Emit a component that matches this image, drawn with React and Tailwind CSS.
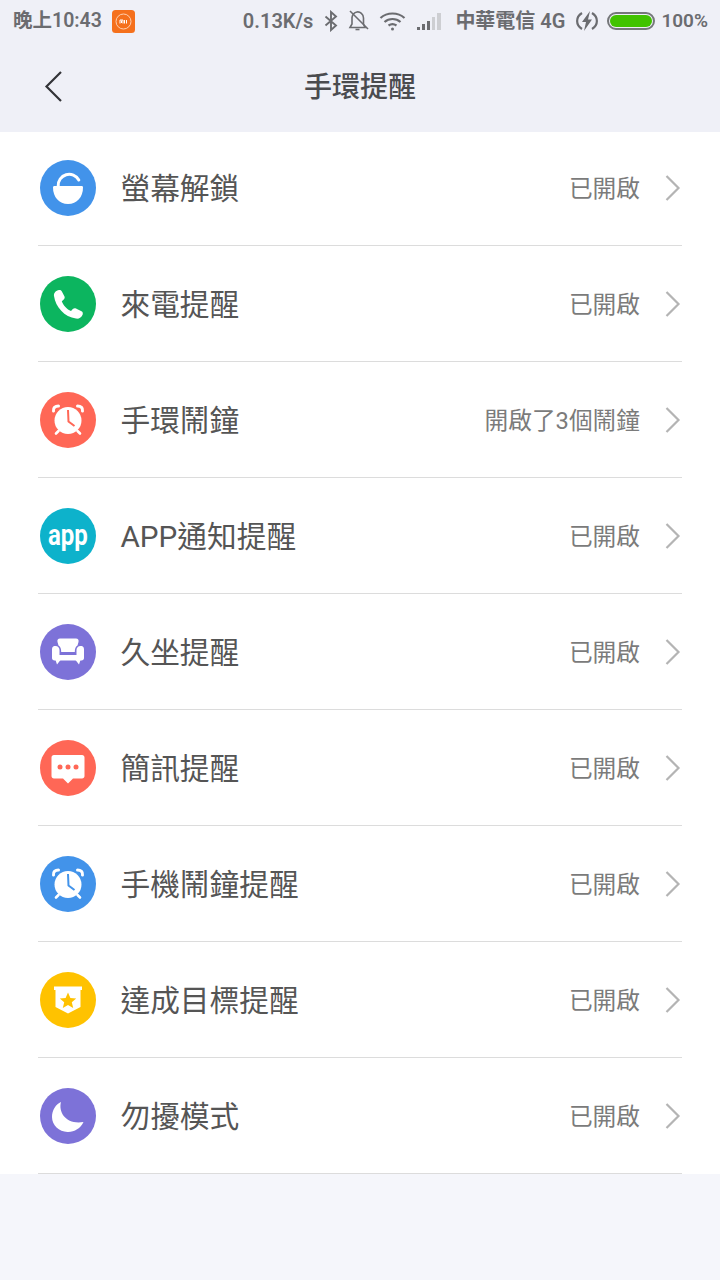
import React from "react";

const Chevron = () => (
  <svg width="18" height="28" viewBox="0 0 18 28" fill="none" className="ml-[24px] shrink-0">
    <path d="M2.5 2 L14.5 14 L2.5 26" stroke="#b4b4b4" strokeWidth="2.2" />
  </svg>
);

const Circle = ({ color, children }) => (
  <div className={`w-[56px] h-[56px] rounded-full shrink-0 ml-[40px] flex items-center justify-center ${color}`}>
    <svg width="56" height="56" viewBox="0 0 56 56">{children}</svg>
  </div>
);

const AlarmGlyph = ({ bg }) => (
  <g>
    <circle cx="28" cy="28.5" r="13.5" fill="#fff" />
    <path d="M13.5 19 C13 16 15 14 18.5 14" fill="none" stroke="#fff" strokeWidth="3" strokeLinecap="round" />
    <path d="M42.5 19 C43 16 41 14 37.5 14" fill="none" stroke="#fff" strokeWidth="3" strokeLinecap="round" />
    <path d="M18.5 39 L16 41.5 M37.5 39 L40 41.5" stroke="#fff" strokeWidth="2.6" strokeLinecap="round" />
    <path d="M28 18 L28.5 29.5 L34.5 34" fill="none" stroke={bg} strokeWidth="2" />
  </g>
);

const icons = [
  <Circle color="bg-[#4293ea]" key="a">
    <path d="M18.2 26 A11 11 0 0 1 38.8 20" fill="none" stroke="#fff" strokeWidth="3" strokeLinecap="round" />
    <path d="M14.5 26 H41.5 C42.5 26 43 26.5 43 27.5 C43 37 37 44 28 44 C19 44 13 37 13 27.5 C13 26.5 13.5 26 14.5 26 Z" fill="#fff" />
  </Circle>,
  <Circle color="bg-[#0cb55f]" key="b">
    <path d="M14 20 C13.5 17 16 14.5 19 14 C20.5 13.8 21.5 14.5 22 15.8 L24.5 20.5 C25 21.8 24.5 22.8 23.5 23.7 L21.8 25.2 C23.2 29.5 27 33.3 31 35 L32.8 33.1 C33.8 32.1 34.9 31.9 36 32.5 L41.5 35.3 C42.7 36 43.1 37.1 42.7 38.5 C41.7 41.5 39 43 36 42.6 C24.5 41 15.5 31 14 20 Z" fill="#fff" />
  </Circle>,
  <Circle color="bg-[#ff6756]" key="c"><AlarmGlyph bg="#ff6756" /></Circle>,
  <div key="d" className="w-[56px] h-[56px] rounded-full shrink-0 ml-[40px] flex items-center justify-center bg-[#0db2cb]">
    <span className="text-[30px] font-bold leading-none text-white scale-x-[0.8] mb-[2px]">app</span>
  </div>,
  <Circle color="bg-[#7d72d8]" key="e">
    <path d="M20 14.5 H36 C38 14.5 39 16 38.5 18 L37.5 21.5 C35.5 22.5 34.8 25 34.8 28 H21.2 C21.2 25 20.5 22.5 18.5 21.5 L17.5 18 C17 16 18 14.5 20 14.5 Z" fill="#fff" />
    <path d="M12 25 C12 22.5 14 22 15.5 22 C18 22 19.5 24 19.5 26 V31 H36.5 V26 C36.5 24 38 22 40.5 22 C42 22 44 22.5 44 25 V34 C44 35.5 43 36.5 41.5 36.5 H14.5 C13 36.5 12 35.5 12 34 Z" fill="#fff" />
    <path d="M15.5 36 L17 40.5 L20.5 36 Z M40.5 36 L39 40.5 L35.5 36 Z" fill="#fff" />
  </Circle>,
  <Circle color="bg-[#ff6756]" key="f">
    <path d="M14 15 H42 C43.5 15 44.5 16 44.5 17.5 V36 C44.5 37.5 43.5 38.5 42 38.5 H33 L28 43.5 L23 38.5 H14 C12.5 38.5 11.5 37.5 11.5 36 V17.5 C11.5 16 12.5 15 14 15 Z" fill="#fff" />
    <circle cx="20" cy="27" r="2.5" fill="#ff6756" />
    <circle cx="28" cy="27" r="2.5" fill="#ff6756" />
    <circle cx="36" cy="27" r="2.5" fill="#ff6756" />
  </Circle>,
  <Circle color="bg-[#4293ea]" key="g"><AlarmGlyph bg="#4293ea" /></Circle>,
  <Circle color="bg-[#ffc200]" key="h">
    <path d="M14 14.5 H42 V18 H40.5 V35 L28 41.5 L15.5 35 V18 H14 Z" fill="#fff" />
    <path d="M28 20.5 L30.4 26 L36.2 26.5 L31.8 30.3 L33.2 36 L28 33 L22.8 36 L24.2 30.3 L19.8 26.5 L25.6 26 Z" fill="#ffc200" />
  </Circle>,
  <Circle color="bg-[#7d72d8]" key="i">
    <path d="M21 14 C18 25 27 37 43.5 34 C40.5 40.5 34 44.3 27.5 44 C19 43.7 12 37 12 29 C12 22 16 16 21 14 Z" fill="#fff" />
  </Circle>,
];

const rows = [
  ["螢幕解鎖", "已開啟"],
  ["來電提醒", "已開啟"],
  ["手環鬧鐘", "開啟了3個鬧鐘"],
  ["APP通知提醒", "已開啟"],
  ["久坐提醒", "已開啟"],
  ["簡訊提醒", "已開啟"],
  ["手機鬧鐘提醒", "已開啟"],
  ["達成目標提醒", "已開啟"],
  ["勿擾模式", "已開啟"],
];

const font = "font-['Roboto','Noto_Sans_CJK_TC',sans-serif]";

function StatusBar() {
  return (
    <div className="h-[42px] flex items-center text-[20px] font-semibold text-[#6b6c70] pl-[13px] pr-[12px] whitespace-nowrap">
      <span className="text-[19.5px]">晚上10:43</span>
      <svg width="23" height="23" viewBox="0 0 23 23" className="ml-[10px] shrink-0">
        <rect width="23" height="23" rx="3.5" fill="#f5701c" />
        <circle cx="11.5" cy="11.5" r="7.5" fill="none" stroke="#ffd9bf" strokeWidth="0.9" />
        <path d="M8 13.5 V10 H11 V13.5 M9.5 10.5 V13 M12.5 10 V13.5 M14.5 10 V13.5" fill="none" stroke="#fff" strokeWidth="1" />
      </svg>
      <span className="ml-auto">0.13K/s</span>
      <svg width="14" height="22" viewBox="0 0 14 22" className="ml-[11px] shrink-0" fill="none" stroke="#6b6c70" strokeWidth="1.9">
        <path d="M1.5 6.5 L12 15.5 L7 20 V2 L12 6.5 L1.5 15.5" />
      </svg>
      <svg width="22" height="24" viewBox="0 0 22 24" className="ml-[10px] shrink-0" fill="none" stroke="#6b6c70" strokeWidth="1.6">
        <path d="M2 18.5 H17 L15.5 15 V9 C15.5 5 12 2.5 9 3 C6.5 3.5 4.5 5.5 4 8.5 V15 Z" />
        <path d="M7.5 20.5 H11.5" />
        <path d="M2 2 L20 20" />
      </svg>
      <svg width="27" height="20" viewBox="0 0 27 20" className="ml-[9px] shrink-0" fill="none" stroke="#6b6c70" strokeWidth="2.2">
        <path d="M1.5 7 C8 1 19 1 25.5 7" />
        <path d="M5.5 11 C10 7 17 7 21.5 11" />
        <path d="M9.5 14.5 C12 12.8 15 12.8 17.5 14.5" />
        <circle cx="13.5" cy="18" r="1.5" fill="#6b6c70" stroke="none" />
      </svg>
      <svg width="25" height="18" viewBox="0 0 25 18" className="ml-[11px] shrink-0">
        <path d="M0 15 H3 V18 H0 Z M5 12 H8 V18 H5 Z M10 9 H13 V18 H10 Z" fill="#6b6c70" />
        <path d="M15 5 H18 V18 H15 Z M20 1 H24 V18 H20 Z" fill="#cdced2" />
      </svg>
      <span className="ml-[13px]">中華電信 4G</span>
      <svg width="22" height="22" viewBox="0 0 22 22" className="ml-[11px] shrink-0" fill="none">
        <path d="M6 3 C-0.5 7 -0.5 15 6 19 M16 3 C22.5 7 22.5 15 16 19" stroke="#6b6c70" strokeWidth="2.2" />
        <path d="M14 1 L6 12 H10 L8 21 L16 9.5 H12 Z" fill="#6b6c70" />
      </svg>
      <div className="ml-[9px] w-[48px] h-[18px] rounded-full border-2 border-[#75777a] p-[1px] shrink-0">
        <div className="w-full h-full rounded-full bg-[#41c300]" />
      </div>
      <span className="ml-[6px] text-[19px]">100%</span>
    </div>
  );
}

export default function App() {
  return (
    <div className={`w-[720px] h-[1280px] bg-[#f5f6fb] ${font} overflow-hidden`}>
      <div className="h-[132px] bg-[#eff0f7]">
        <StatusBar />
        <div className="relative h-[90px] flex items-center justify-center">
          <svg width="20" height="34" viewBox="0 0 20 34" fill="none" className="absolute left-[44px] top-[28px]">
            <path d="M17 2 L2.5 16.5 L17 31" stroke="#333438" strokeWidth="2.2" />
          </svg>
          <span className="text-[28px] font-medium text-[#4a4b4f] mt-[2px]">手環提醒</span>
        </div>
      </div>
      <div className="bg-white">
        {rows.map(([label, status], i) => (
          <div key={label} className={`flex items-center relative ${i === 0 ? "h-[114px] pb-[2px]" : "h-[116px]"}`}>
            {icons[i]}
            <span className="ml-[24.5px] mt-[2px] text-[29.7px] text-[#555555] whitespace-nowrap">{label}</span>
            <span className="ml-auto mt-[4px] text-[23.7px] text-[#7b7b7b] whitespace-nowrap">{status}</span>
            <Chevron />
            <div className="w-[38px] shrink-0" />
            <div className="absolute left-[38px] right-[38px] bottom-0 h-px bg-[#dcdcdc]" />
          </div>
        ))}
      </div>
    </div>
  );
}
